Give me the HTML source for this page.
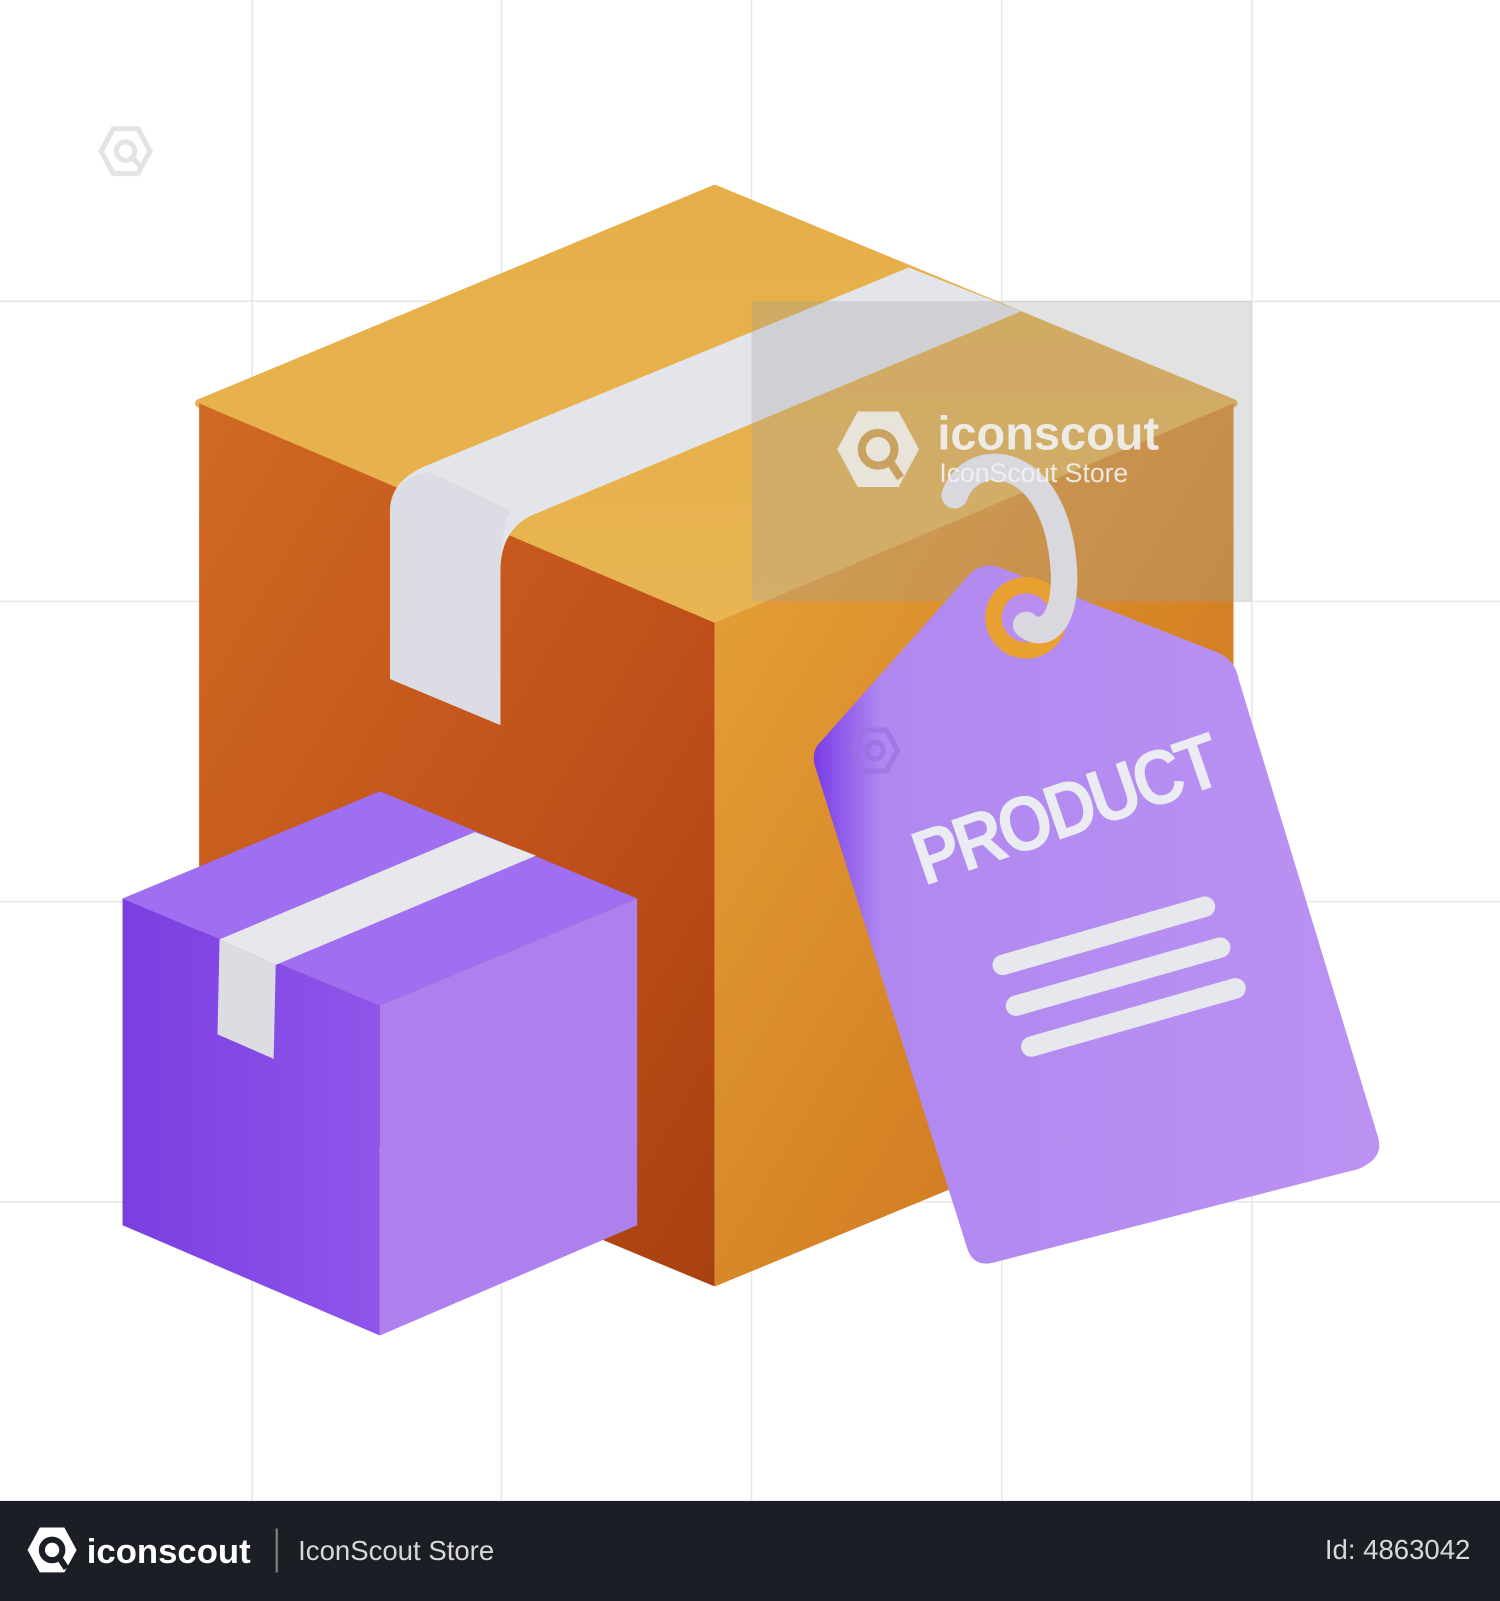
<!DOCTYPE html>
<html><head><meta charset="utf-8"><style>
html,body{margin:0;padding:0;background:#fff;}
svg{display:block;width:1500px;height:1601px;}
</style></head><body>
<svg viewBox="0 0 1469 1568" preserveAspectRatio="none" xmlns="http://www.w3.org/2000/svg">
<defs>
<linearGradient id="lf" x1="0" y1="0" x2="1" y2="1"><stop offset="0" stop-color="#d06a22"/><stop offset="0.6" stop-color="#c0501a"/><stop offset="1" stop-color="#a84010"/></linearGradient>
<linearGradient id="rf" x1="0" y1="0" x2="1" y2="1"><stop offset="0" stop-color="#e6a43a"/><stop offset="0.5" stop-color="#d88828"/><stop offset="1" stop-color="#c86a1c"/></linearGradient>
<linearGradient id="tf" x1="0" y1="0" x2="0" y2="1"><stop offset="0" stop-color="#e6ae48"/><stop offset="1" stop-color="#e8b552"/></linearGradient>
<linearGradient id="pl" x1="0" y1="0" x2="1" y2="0"><stop offset="0" stop-color="#7a3fe0"/><stop offset="1" stop-color="#8f55ea"/></linearGradient>
<linearGradient id="tag" x1="0" y1="0" x2="1" y2="0"><stop offset="0" stop-color="#7a3ce6"/><stop offset="0.12" stop-color="#b088f0"/><stop offset="1" stop-color="#bb92f2"/></linearGradient>
</defs>
<rect width="1469" height="1568" fill="#fff"/>
<g stroke="#e6e6e6" stroke-width="1.5">
<line x1="247" y1="0" x2="247" y2="1470"/><line x1="491" y1="0" x2="491" y2="1470"/><line x1="736" y1="0" x2="736" y2="1470"/><line x1="981" y1="0" x2="981" y2="1470"/><line x1="1226" y1="0" x2="1226" y2="1470"/>
<line x1="0" y1="295" x2="1469" y2="295"/><line x1="0" y1="589" x2="1469" y2="589"/><line x1="0" y1="883" x2="1469" y2="883"/><line x1="0" y1="1177" x2="1469" y2="1177"/>
</g>
<g transform="translate(123,148)" fill="none" stroke="#e4e4e4" stroke-width="5"><polygon points="-12,-22 12,-22 24,0 12,22 -12,22 -24,0"/><circle r="9"/><line x1="6" y1="6" x2="14" y2="14"/></g>
<!-- big box -->
<polygon points="700,185 1208,395 700,610 195,395" fill="url(#tf)" stroke="url(#tf)" stroke-width="8" stroke-linejoin="round"/>
<polygon points="195,395 700,610 700,1260 195,1050" fill="url(#lf)"/>
<polygon points="700,610 1208,395 1208,1050 700,1260" fill="url(#rf)"/>
<!-- tape -->
<path d="M890,262 L1000,305 L520,505 Q490,520 490,560 L490,710 L382,665 L382,500 Q382,470 420,455 Z" fill="#e3e5ea"/>
<path d="M382,500 Q382,470 420,462 L500,500 Q490,520 490,560 L490,710 L382,665 Z" fill="#dcdce4"/>
<rect x="736" y="295" width="490" height="294" fill="#a0a0a0" opacity="0.3"/>
<!-- small purple box -->
<polygon points="372,775 624,880 372,985 120,880" fill="#a06ef0"/>
<polygon points="120,880 372,985 372,1308 120,1200" fill="url(#pl)"/>
<polygon points="372,985 624,880 624,1200 372,1308" fill="#ae80ee"/>
<polygon points="465,815 525,838 270,945 215,920" fill="#e6e8ec"/>
<polygon points="215,920 270,945 268,1037 213,1013" fill="#dcdde3"/>
<!-- tag -->
<path d="M805,725 L950,562 Q962,550 980,556 L1195,640 Q1210,648 1213,665 L1350,1115 Q1355,1135 1330,1145 L975,1236 Q955,1242 948,1225 L798,750 Q794,735 805,725 Z" fill="url(#tag)"/>
<circle cx="1005" cy="605" r="40" fill="#e8a030"/>
<circle cx="1005" cy="605" r="24" fill="#b98ef0"/>
<path d="M935,485 C950,440 1035,440 1042,560 C1044,615 1020,625 1005,612" fill="none" stroke="#d8d8de" stroke-width="26" stroke-linecap="round"/>
<text x="0" y="0" transform="translate(905,868) rotate(-19)" font-family="Liberation Sans, sans-serif" font-weight="bold" font-size="76" fill="#ebebf3" textLength="310" lengthAdjust="spacingAndGlyphs" letter-spacing="-4">PRODUCT</text>
<g stroke="#e6e8ee" stroke-width="20" stroke-linecap="round"><line x1="982" y1="945" x2="1180" y2="888"/><line x1="995" y1="985" x2="1195" y2="928"/><line x1="1010" y1="1025" x2="1210" y2="968"/></g>
<g transform="translate(857,735)" fill="none" stroke="#9d6fe0" stroke-width="5" opacity="0.7"><polygon points="-11,-20 11,-20 22,0 11,20 -11,20 -22,0"/><circle r="8"/></g>
<g transform="translate(860,440)" opacity="0.85"><polygon points="-20,-37 20,-37 40,0 20,37 -20,37 -40,0" fill="#eeeeee"/><circle r="16" fill="none" stroke="#c8a060" stroke-width="8"/><line x1="10" y1="10" x2="22" y2="28" stroke="#c8a060" stroke-width="8"/></g>
<text x="918" y="440" font-family="Liberation Sans, sans-serif" font-weight="bold" font-size="46" fill="#f2f2f2" opacity="0.9">iconscout</text>
<text x="920" y="472" font-family="Liberation Sans, sans-serif" font-size="26" fill="#f2f2f2" opacity="0.9">IconScout Store</text>
<rect x="0" y="1470" width="1469" height="98" fill="#1b1e24"/>
<g transform="translate(51,1518)"><polygon points="-12,-22 12,-22 24,0 12,22 -12,22 -24,0" fill="#fff"/><circle r="10" fill="none" stroke="#1b1e24" stroke-width="6"/><line x1="6" y1="6" x2="14" y2="18" stroke="#1b1e24" stroke-width="6"/></g>
<text x="85" y="1531" font-family="Liberation Sans, sans-serif" font-weight="bold" font-size="34" fill="#fff">iconscout</text>
<rect x="270" y="1497" width="2" height="43" fill="#888"/>
<text x="292" y="1528" font-family="Liberation Sans, sans-serif" font-size="27" fill="#d8d8d8">IconScout Store</text>
<text x="1440" y="1527" text-anchor="end" font-family="Liberation Sans, sans-serif" font-size="27" fill="#d8d8d8">Id: 4863042</text>
</svg>
</body></html>
